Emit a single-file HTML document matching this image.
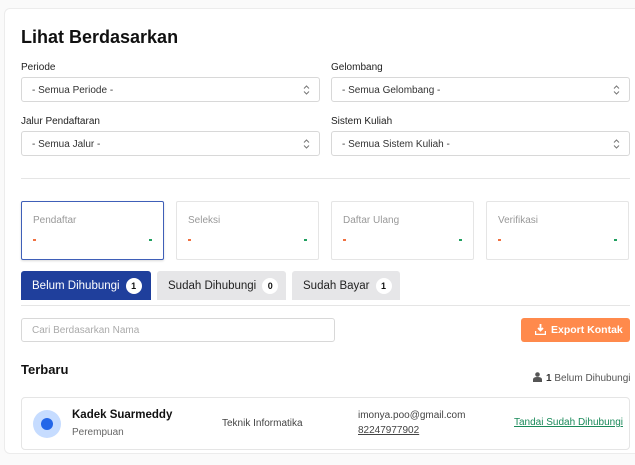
<!DOCTYPE html>
<html><head><style>
*{box-sizing:border-box;margin:0;padding:0}
body{width:635px;height:465px;background:#fafafa;font-family:"Liberation Sans",sans-serif;position:relative;overflow:hidden;color:#111}
.card{position:absolute;left:4px;top:8px;width:640px;height:446px;background:#fff;border:1px solid #ececec;border-radius:6px}
.a{position:absolute}
h1{position:absolute;left:21px;top:27px;font-size:18px;font-weight:bold;color:#111}
.lbl{position:absolute;font-size:10px;color:#222}
.sel{position:absolute;height:25px;border:1px solid #d8d8d8;border-radius:3px;font-size:10px;color:#333;padding:7px 10px;background:#fff}
.chev{position:absolute;right:9px;top:7px}
.hr{position:absolute;left:21px;width:609px;height:1px;background:#e5e5e5}
.stat{position:absolute;top:201px;width:143px;height:59px;border:1px solid #e5e5e5;border-radius:2px;background:#fff}
.stat .t{position:absolute;left:11px;top:13px;font-size:10px;color:#999}
.stat .o{position:absolute;left:11px;top:37px;width:3px;height:1.5px;background:#f07040}
.stat .g{position:absolute;right:11px;top:37px;width:3px;height:1.5px;background:#20a060}
.tab{position:absolute;top:271px;height:29px;border-radius:3px 3px 0 0;background:#e6e6e8;font-size:11.5px;color:#222;padding:7px 11px;white-space:nowrap}
.tab b{display:inline-block;width:16px;height:16px;border-radius:50%;background:#fff;color:#111;font-size:9px;text-align:center;line-height:16px;margin-left:6px;vertical-align:0}
</style></head><body>
<div class="card"></div>
<h1>Lihat Berdasarkan</h1>
<div class="lbl" style="left:21px;top:62px">Periode</div>
<div class="lbl" style="left:331px;top:62px">Gelombang</div>
<div class="sel" style="left:21px;top:77px;width:299px">- Semua Periode -<svg class="chev" width="7" height="10" viewBox="0 0 7 10"><path d="M1 3.5L3.5 1L6 3.5M1 6.5L3.5 9L6 6.5" stroke="#777" fill="none"/></svg></div>
<div class="sel" style="left:331px;top:77px;width:299px">- Semua Gelombang -<svg class="chev" width="7" height="10" viewBox="0 0 7 10"><path d="M1 3.5L3.5 1L6 3.5M1 6.5L3.5 9L6 6.5" stroke="#777" fill="none"/></svg></div>
<div class="lbl" style="left:21px;top:116px">Jalur Pendaftaran</div>
<div class="lbl" style="left:331px;top:116px">Sistem Kuliah</div>
<div class="sel" style="left:21px;top:131px;width:299px">- Semua Jalur -<svg class="chev" width="7" height="10" viewBox="0 0 7 10"><path d="M1 3.5L3.5 1L6 3.5M1 6.5L3.5 9L6 6.5" stroke="#777" fill="none"/></svg></div>
<div class="sel" style="left:331px;top:131px;width:299px">- Semua Sistem Kuliah -<svg class="chev" width="7" height="10" viewBox="0 0 7 10"><path d="M1 3.5L3.5 1L6 3.5M1 6.5L3.5 9L6 6.5" stroke="#777" fill="none"/></svg></div>
<div class="hr" style="top:178px"></div>
<div class="stat" style="left:21px;border:1.5px solid #3f5fb8;box-shadow:0 1px 2px rgba(0,0,0,.15)"><div class="t">Pendaftar</div><div class="o"></div><div class="g"></div></div>
<div class="stat" style="left:176px"><div class="t">Seleksi</div><div class="o"></div><div class="g"></div></div>
<div class="stat" style="left:331px"><div class="t">Daftar Ulang</div><div class="o"></div><div class="g"></div></div>
<div class="stat" style="left:486px"><div class="t">Verifikasi</div><div class="o"></div><div class="g"></div></div>
<div class="tab" style="left:21px;width:130px;background:#1f3f9c;color:#fff">Belum Dihubungi<b>1</b></div>
<div class="tab" style="left:157px;width:129px">Sudah Dihubungi<b>0</b></div>
<div class="tab" style="left:292px;width:108px">Sudah Bayar<b>1</b></div>
<div class="hr" style="top:305px"></div>
<div class="sel" style="left:21px;top:318px;width:314px;height:24px;color:#aaa;padding-top:6px">Cari Berdasarkan Nama</div>
<div class="a" style="left:521px;top:318px;width:109px;height:24px;background:#ff8a4c;border-radius:3px;color:#fff;font-size:10.5px;font-weight:bold;padding:6px 0 0 30px">Export Kontak
<svg class="a" style="left:14px;top:6px" width="11" height="11" viewBox="0 0 11 11"><path d="M5.5 0v6M3 4l2.5 2.5L8 4" stroke="#fff" stroke-width="1.8" fill="none"/><path d="M0.5 7v3.5h10V7" stroke="#fff" stroke-width="1.5" fill="none"/></svg></div>
<div class="a" style="left:21px;top:362px;font-size:13px;font-weight:bold">Terbaru</div>
<div class="a" style="left:533px;top:372px;font-size:10px;color:#555"><svg width="9" height="10" viewBox="0 0 9 10" style="vertical-align:-1px;margin-right:4px"><circle cx="4.5" cy="2.5" r="2.3" fill="#555"/><path d="M0 10v-2.5q0-2.5 4.5-2.5t4.5 2.5V10z" fill="#555"/></svg><b style="color:#333">1</b> Belum Dihubungi</div>
<div class="a" style="left:21px;top:397px;width:609px;height:53px;border:1px solid #e5e5e5;border-radius:4px;background:#fff">
<div class="a" style="left:11px;top:12px;width:28px;height:28px;border-radius:50%;background:#c6dcff"></div>
<div class="a" style="left:19px;top:20px;width:12px;height:12px;border-radius:50%;background:#2366e8"></div>
<div class="a" style="left:50px;top:11px;font-size:11.5px;font-weight:bold">Kadek Suarmeddy</div>
<div class="a" style="left:50px;top:29px;font-size:10px;color:#666">Perempuan</div>
<div class="a" style="left:200px;top:20px;font-size:10px;color:#444">Teknik Informatika</div>
<div class="a" style="left:336px;top:12px;font-size:10px;color:#444">imonya.poo@gmail.com</div>
<div class="a" style="left:336px;top:27px;font-size:10px;color:#444;text-decoration:underline">82247977902</div>
<div class="a" style="left:492px;top:19px;font-size:10px;color:#1a8a5a;text-decoration:underline">Tandai Sudah Dihubungi</div>
</div>
</body></html>
